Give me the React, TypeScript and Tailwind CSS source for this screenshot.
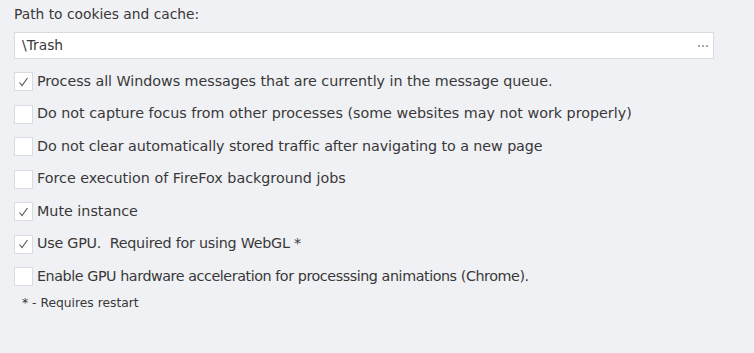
import React from "react";

const items: { label: string; checked: boolean; track: string }[] = [
  { label: "Process all Windows messages that are currently in the message queue.", checked: true, track: "tracking-[-0.04px]" },
  { label: "Do not capture focus from other processes (some websites may not work properly)", checked: false, track: "tracking-normal" },
  { label: "Do not clear automatically stored traffic after navigating to a new page", checked: false, track: "tracking-[-0.08px]" },
  { label: "Force execution of FireFox background jobs", checked: false, track: "tracking-normal" },
  { label: "Mute instance", checked: true, track: "tracking-normal" },
  { label: "Use GPU.  Required for using WebGL *", checked: true, track: "tracking-[-0.24px]" },
  { label: "Enable GPU hardware acceleration for processsing animations (Chrome).", checked: false, track: "tracking-[-0.43px]" },
];

function Box({ checked }: { checked: boolean }) {
  return (
    <div className="w-[19px] h-[19px] shrink-0 border border-[#d9dce3] bg-white flex items-center justify-center">
      {checked && (
        <svg width="11" height="10" viewBox="0 0 11 10">
          <path d="M1.5 5.5 L4 8.5 L9.5 1" fill="none" stroke="#555" strokeWidth="1.1" />
        </svg>
      )}
    </div>
  );
}

export default function App() {
  return (
    <div
      className="w-[754px] h-[353px] bg-[#f0f1f5] text-[#383838] pl-[14px] pr-[40px] pt-[4px]"
      style={{ fontFamily: '"DejaVu Sans", Verdana, sans-serif' }}
    >
      <div className="text-[13.8px] h-[20px] leading-[20px]">Path to cookies and cache:</div>
      <div className="mt-[8px] h-[27px] w-[700px] border border-[#d9dce3] bg-white flex items-center pl-[7px] pr-[5px]">
        <span className="text-[13.8px] flex-1">\Trash</span>
        <div className="flex gap-[2px] mt-[1px]">
          <div className="w-[2px] h-[2px] bg-[#a8a8a8]" />
          <div className="w-[2px] h-[2px] bg-[#a8a8a8]" />
          <div className="w-[2px] h-[2px] bg-[#a8a8a8]" />
        </div>
      </div>
      <div className="mt-[13px] flex flex-col gap-[13.5px]">
        {items.map((it) => (
          <div key={it.label} className="flex items-center gap-[4px] h-[19px]">
            <Box checked={it.checked} />
            <span className={"text-[14.3px] whitespace-pre " + it.track}>{it.label}</span>
          </div>
        ))}
      </div>
      <div className="mt-[9px] pl-[8px] text-[12.3px] h-[16px] leading-[16px]">* - Requires restart</div>
    </div>
  );
}
